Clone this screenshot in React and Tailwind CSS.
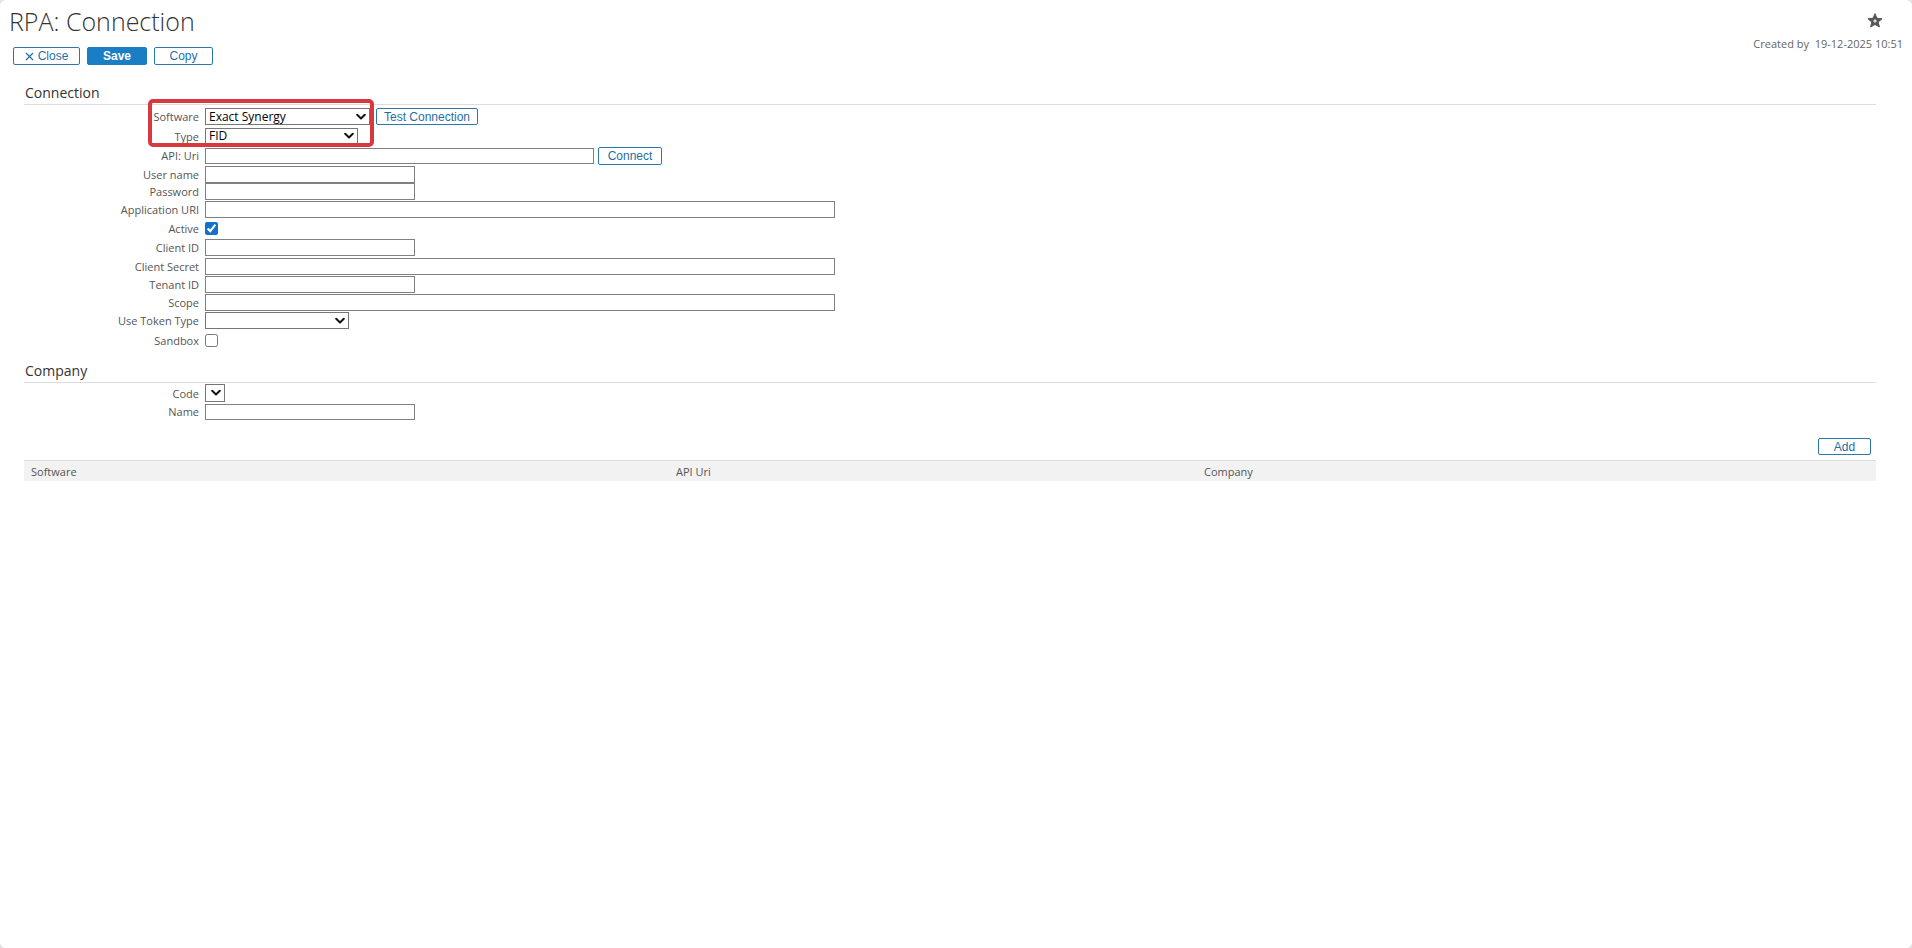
import React from "react";

const font = { fontFamily: '"Open Sans", "Noto Sans", sans-serif' };

function Chevron() {
  return (
    <svg
      className="pointer-events-none absolute right-[4px] top-1/2 -translate-y-1/2"
      width="10"
      height="7"
      viewBox="0 0 10 7"
    >
      <path d="M1.2 1.3 L5 5 L8.8 1.3" fill="none" stroke="#111" strokeWidth="2" strokeLinecap="round" strokeLinejoin="round" />
    </svg>
  );
}

function Select({ w, h = 17, value }) {
  return (
    <div className="relative" style={{ width: w, height: h }}>
      <div className="flex h-full w-full items-center border border-[#767676] bg-white pl-[3px] text-[12px] leading-none text-black">
        {value}
      </div>
      <Chevron />
    </div>
  );
}

function Input({ w, h = 17 }) {
  return <div className="border border-[#808080] bg-white" style={{ width: w, height: h }} />;
}

function OutlineBtn({ children, w, h = 18 }) {
  return (
    <button
      className="flex items-center justify-center rounded-[2px] border border-[#2a78ae] bg-white text-[12px] leading-none text-[#1f6fa6]"
      style={{ width: w, height: h, fontFamily: '"Liberation Sans", Arial, sans-serif' }}
    >
      {children}
    </button>
  );
}

function Row({ label, h, children }) {
  return (
    <div className="flex items-center" style={{ height: h }}>
      <div className="w-[175px] text-right text-[11px] leading-none text-[#555]">{label}</div>
      <div className="ml-[6px] flex items-center">{children}</div>
    </div>
  );
}

function Check({ checked }) {
  return (
    <input
      type="checkbox"
      defaultChecked={checked}
      className="m-0 h-[13px] w-[13px] accent-[#1570cd]"
    />
  );
}

export default function App() {
  return (
    <div className="h-[948px] w-[1912px] overflow-hidden bg-[#e4e4e4]" style={font}>
      <div className="relative h-[948px] w-[1912px] rounded-[6px] bg-white">
        {/* Header */}
        <div className="flex justify-between">
          <div>
            <div className="pl-[9px] pt-[4px] text-[25px] font-light leading-[34px] text-[#333]">
              RPA: Connection
            </div>
            <div className="ml-[13px] mt-[9px] flex gap-[7px]">
              <OutlineBtn w={67}>
                <span className="flex items-center gap-[4px]">
                  <svg width="9" height="9" viewBox="0 0 9 9">
                    <path d="M1 1 L8 8 M8 1 L1 8" stroke="#1f6fa6" strokeWidth="1.2" />
                  </svg>
                  Close
                </span>
              </OutlineBtn>
              <button
                className="flex h-[18px] w-[60px] items-center justify-center rounded-[2px] border border-[#1a7ec5] bg-[#1a7ec5] text-[12px] font-bold leading-none text-white"
                style={{ fontFamily: '"Liberation Sans", Arial, sans-serif' }}
              >
                Save
              </button>
              <OutlineBtn w={59}>Copy</OutlineBtn>
            </div>
          </div>
          <div className="flex flex-col items-end pr-[9px]">
            <div className="mr-[20px] mt-[13px]">
              <svg width="16" height="15" viewBox="0 0 24 23">
                <path
                  d="M12 1 L15.1 8.1 L22.8 8.8 L17 13.9 L18.7 21.5 L12 17.5 L5.3 21.5 L7 13.9 L1.2 8.8 L8.9 8.1 Z"
                  fill="#555"
                  stroke="#555"
                  strokeWidth="1.5"
                  strokeLinejoin="round"
                />
                <path d="M12 9.5 V15 M9.3 12.3 H14.7" stroke="#fff" strokeWidth="1.6" />
              </svg>
            </div>
            <div className="mt-[10px] text-[11px] leading-none text-[#666]">Created by&nbsp; 19-12-2025 10:51</div>
          </div>
        </div>

        {/* Connection section */}
        <div className="ml-[24px] mr-[36px]">
          <div className="mt-[19px] border-b border-[#dddddd] pb-[2px] pl-[1px] text-[14px] leading-[18px] text-[#333]">
            Connection
          </div>
          <div className="mt-[2px]">
            <Row label="Software" h={19}>
              <Select w={165} value="Exact Synergy" />
              <div className="ml-[6px]">
                <OutlineBtn w={102} h={17}>Test Connection</OutlineBtn>
              </div>
            </Row>
            <Row label="Type" h={20}>
              <Select w={153} value="FID" />
            </Row>
            <Row label="API: Uri" h={19}>
              <Input w={389} h={16} />
              <div className="ml-[4px]">
                <OutlineBtn w={64} h={18}>Connect</OutlineBtn>
              </div>
            </Row>
            <Row label="User name" h={18}>
              <Input w={210} />
            </Row>
            <Row label="Password" h={17}>
              <Input w={210} />
            </Row>
            <Row label="Application URI" h={18}>
              <Input w={630} />
            </Row>
            <Row label="Active" h={20}>
              <Check checked />
            </Row>
            <Row label="Client ID" h={19}>
              <Input w={210} />
            </Row>
            <Row label="Client Secret" h={18}>
              <Input w={630} />
            </Row>
            <Row label="Tenant ID" h={18}>
              <Input w={210} />
            </Row>
            <Row label="Scope" h={18}>
              <Input w={630} />
            </Row>
            <Row label="Use Token Type" h={19}>
              <Select w={144} value="" />
            </Row>
            <Row label="Sandbox" h={20}>
              <Check />
            </Row>
          </div>

          {/* Company */}
          <div className="mt-[12px] border-b border-[#dddddd] pb-[2px] pl-[1px] text-[14px] leading-[18px] text-[#333]">
            Company
          </div>
          <div className="mt-[0px]">
            <Row label="Code" h={20}>
              <Select w={20} h={18} value="" />
            </Row>
            <Row label="Name" h={17}>
              <Input w={210} h={16} />
            </Row>
          </div>

          <div className="mt-[18px] flex justify-end pr-[5px]">
            <OutlineBtn w={53} h={17}>Add</OutlineBtn>
          </div>

          <div className="mt-[5px] flex h-[21px] items-center border-t border-[#dddddd] bg-[#f2f2f2] text-[11px] leading-none text-[#555]">
            <div className="w-[645px] pl-[7px]">Software</div>
            <div className="w-[528px] pl-[7px]">API Uri</div>
            <div className="pl-[7px]">Company</div>
          </div>
        </div>

        {/* Highlight box */}
        <div className="pointer-events-none absolute left-[148px] top-[99px] h-[48px] w-[226px] rounded-[5px] border-[4px] border-[#d8383f]" />
      </div>
    </div>
  );
}
